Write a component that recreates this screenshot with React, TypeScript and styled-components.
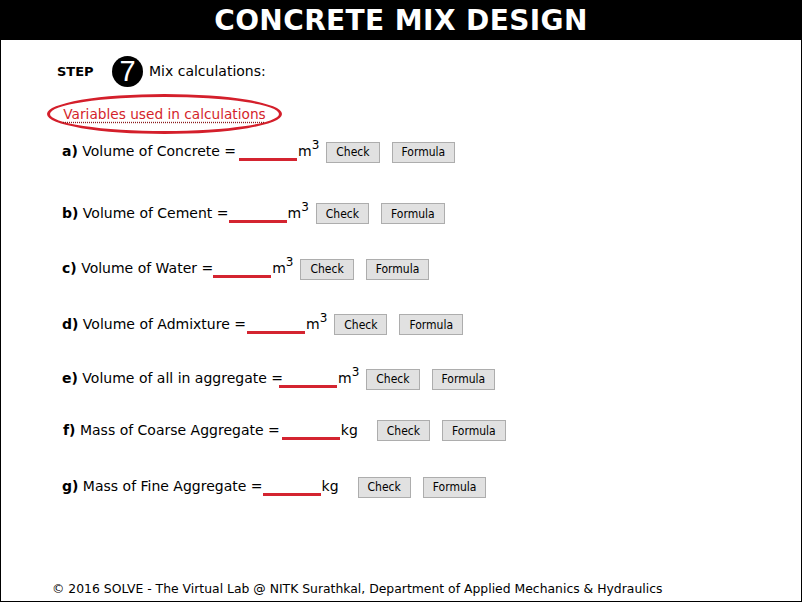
import React from 'react'
import styled, { createGlobalStyle } from 'styled-components'

const GlobalStyle = createGlobalStyle`
  html, body {
    margin: 0;
    padding: 0;
    background: #ffffff;
  }
  body {
    font-family: "DejaVu Sans", Verdana, sans-serif;
    color: #000000;
  }
`

const Page = styled.div`
  width: 802px;
  height: 602px;
  box-sizing: border-box;
  border: 1px solid #000;
  border-top: none;
  display: flex;
  flex-direction: column;
`

const Header = styled.h1`
  margin: 0;
  height: 40px;
  background: #000;
  color: #fff;
  font-family: "DejaVu Sans", Verdana, sans-serif;
  font-weight: bold;
  font-size: 28px;
  line-height: 42px;
  text-align: center;
  letter-spacing: 0.4px;
`

const Content = styled.main`
  flex: 1;
  padding: 15px 0 0 56px;
  display: flex;
  flex-direction: column;
`

const StepRow = styled.div`
  display: flex;
  align-items: center;
  height: 32px;
  font-size: 14px;
`

const StepLabel = styled.span`
  font-weight: bold;
  font-size: 13px;
  width: 55px;
`

const StepBadge = styled.span`
  width: 31px;
  height: 31px;
  border-radius: 50%;
  background: #000;
  color: #fff;
  font-family: "Liberation Sans", Arial, sans-serif;
  font-size: 29px;
  line-height: 31px;
  text-align: center;
  margin-right: 6px;
`

const LinkOval = styled.div`
  align-self: flex-start;
  margin: 7px 0 0 -10px;
  width: 229px;
  height: 34px;
  border: 3px solid #d41f2b;
  border-radius: 50%;
  display: flex;
  align-items: center;
  justify-content: center;
`

const VarLink = styled.a`
  color: #d41f2b;
  font-size: 13.7px;
  text-decoration: underline dotted #8a1a1a;
  text-underline-offset: 3px;
  cursor: pointer;
`

const Row = styled.div<{ $top: number; $indent?: number }>`
  display: flex;
  align-items: baseline;
  margin-top: ${p => p.$top}px;
  margin-left: ${p => p.$indent ?? 5}px;
  font-size: 14px;
  line-height: 20px;
  white-space: pre;
`

const Letter = styled.b`
  font-weight: bold;
`

const Blank = styled.span<{ $lead: number }>`
  display: inline-block;
  width: 58px;
  line-height: 14px;
  border-bottom: 3px solid #d42430;
  margin: 0 1px 0 ${p => p.$lead}px;
`

const Unit = styled.span<{ $gap: number }>`
  margin-right: ${p => p.$gap}px;

  sup {
    font-size: 12px;
    line-height: 0;
    vertical-align: 7px;
  }
`

const Btn = styled.button`
  font-family: "DejaVu Sans Condensed", "DejaVu Sans", sans-serif;
  font-size: 12px;
  height: 21px;
  padding: 0 9px;
  background: #e1e1e1;
  border: 1px solid #adadad;
  border-radius: 0;
  color: #000;
  margin-right: 12px;
`

const Footer = styled.footer`
  font-family: "DejaVu Sans", Tahoma, sans-serif;
  font-size: 12.4px;
  padding: 0 0 5px 51px;
`

type Item = {
  letter: string
  text: string
  unit: 'm3' | 'kg'
  top: number
  lead: number
  indent?: number
}

const items: Item[] = [
  { letter: 'a)', text: ' Volume of Concrete =', unit: 'm3', top: 7, lead: 3 },
  { letter: 'b)', text: ' Volume of Cement =', unit: 'm3', top: 40, lead: 0 },
  { letter: 'c)', text: ' Volume of Water =', unit: 'm3', top: 34, lead: 0 },
  { letter: 'd)', text: ' Volume of Admixture =', unit: 'm3', top: 34, lead: 1 },
  { letter: 'e)', text: ' Volume of all in aggregate =', unit: 'm3', top: 33, lead: -4 },
  { letter: 'f)', text: ' Mass of Coarse Aggregate =', unit: 'kg', top: 30, lead: 2, indent: 6 },
  { letter: 'g)', text: ' Mass of Fine Aggregate =', unit: 'kg', top: 35, lead: 0 },
]

export default function App() {
  return (
    <Page>
      <GlobalStyle />
      <Header>CONCRETE MIX DESIGN</Header>
      <Content>
        <StepRow>
          <StepLabel>STEP</StepLabel>
          <StepBadge>7</StepBadge>
          Mix calculations:
        </StepRow>
        <LinkOval>
          <VarLink>Variables used in calculations</VarLink>
        </LinkOval>
        {items.map(it => (
          <Row key={it.letter} $top={it.top} $indent={it.indent}>
            <span>
              <Letter>{it.letter}</Letter>
              {it.text}
            </span>
            <Blank $lead={it.lead}>{'\u00a0'}</Blank>
            {it.unit === 'm3' ? (
              <Unit $gap={7}>
                m<sup>3</sup>
              </Unit>
            ) : (
              <Unit $gap={19}>kg</Unit>
            )}
            <Btn>Check</Btn>
            <Btn>Formula</Btn>
          </Row>
        ))}
      </Content>
      <Footer>© 2016 SOLVE - The Virtual Lab @ NITK Surathkal, Department of Applied Mechanics &amp; Hydraulics</Footer>
    </Page>
  )
}
